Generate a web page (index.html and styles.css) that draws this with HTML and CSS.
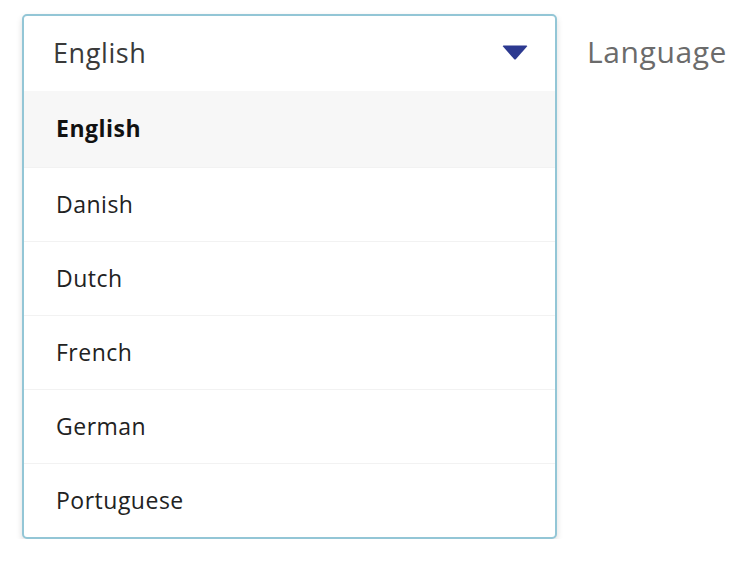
FILE: index.html
```html
<!DOCTYPE html>
<html lang="en">
<head>
<meta charset="utf-8">
<title>Language</title>
<link rel="stylesheet" href="styles.css">
</head>
<body>
<div class="page">
  <div class="dropdown">
    <div class="dropdown-head">
      <span class="current">English</span>
      <svg class="caret" width="26" height="15" viewBox="0 0 26 15" aria-hidden="true">
        <path d="M1.5 0.5 H24.5 Q25.8 0.5 25 1.6 L14 14 Q13 15 12 14 L1 1.6 Q0.2 0.5 1.5 0.5 Z" fill="#2c3990"/>
      </svg>
    </div>
    <ul class="options">
      <li class="option selected">English</li>
      <li class="option">Danish</li>
      <li class="option">Dutch</li>
      <li class="option">French</li>
      <li class="option">German</li>
      <li class="option">Portuguese</li>
    </ul>
  </div>
  <div class="label">Language</div>
</div>
</body>
</html>
```

FILE: styles.css
```css
html, body {
  margin: 0;
  padding: 0;
  background: #ffffff;
}
body {
  font-family: "Open Sans", "Liberation Sans", sans-serif;
}
.page {
  display: flex;
  align-items: flex-start;
  padding: 14px 0 0 22px;
}
.dropdown {
  box-sizing: border-box;
  width: 535px;
  border: 2px solid #93c6d6;
  border-radius: 5px;
  background: #ffffff;
  box-shadow: 0 3px 6px rgba(0, 0, 0, 0.14);
  overflow: hidden;
}
.dropdown-head {
  height: 75px;
  display: flex;
  align-items: center;
  justify-content: space-between;
  padding: 0 27px 0 29px;
}
.current {
  font-size: 27px;
  letter-spacing: 0.6px;
  color: #3a3a3a;
  line-height: 1;
  margin-top: -2px;
}
.caret {
  display: block;
  margin-top: -2px;
}
.options {
  list-style: none;
  margin: 0;
  padding: 0;
}
.option {
  height: 74px;
  display: flex;
  align-items: center;
  padding: 0 32px 2px;
  font-size: 23px;
  letter-spacing: 0.5px;
  color: #222222;
  border-top: 1px solid #f2f2f2;
  box-sizing: border-box;
}
.option.selected {
  height: 76px;
  background: #f7f7f7;
  font-weight: 700;
  color: #111111;
  border-top: none;
}
.label {
  margin-left: 30px;
  margin-top: 18px;
  font-size: 30px;
  letter-spacing: 0.6px;
  line-height: 40px;
  color: #6b6b6b;
}
```
